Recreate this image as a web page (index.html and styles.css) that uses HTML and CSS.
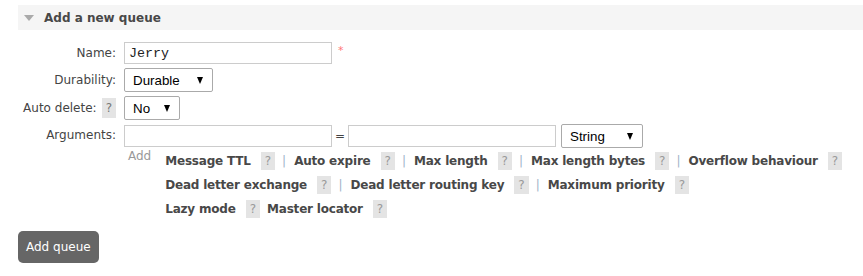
FILE: index.html
```html
<!DOCTYPE html>
<html lang="en">
<head>
  <meta charset="UTF-8">
  <title>Add a new queue</title>
  <link rel="stylesheet" href="styles.css">
</head>
<body>

  <div class="section">
    <h2 class="section-title"><span class="arrow"></span>Add a new queue</h2>

    <form class="queue-form">
      <table class="form">
        <tr>
          <th><label for="name">Name:</label></th>
          <td><input type="text" id="name" class="wide mono" value="Jerry"><span class="mand">*</span></td>
        </tr>
        <tr>
          <th><label>Durability:</label></th>
          <td>
            <div class="select durable"><span>Durable</span><span class="caret"></span></div>
          </td>
        </tr>
        <tr>
          <th><label>Auto delete:</label><span class="help label-help">?</span></th>
          <td>
            <div class="select autodel"><span>No</span><span class="caret"></span></div>
          </td>
        </tr>
        <tr>
          <th class="top"><label>Arguments:</label></th>
          <td>
            <div class="arg-row">
              <input type="text" class="wide">
              <span class="eq">=</span>
              <input type="text" class="wide">
              <div class="select argtype"><span>String</span><span class="caret"></span></div>
            </div>
            <!-- bekannte Argumente -->
            <div class="arg-help">
              <span class="add">Add</span>
              <div class="arg-links">
                <div><b>Message TTL</b><span class="help">?</span><i>|</i><b>Auto expire</b><span class="help">?</span><i>|</i><b>Max length</b><span class="help">?</span><i>|</i><b>Max length bytes</b><span class="help">?</span><i>|</i><b>Overflow behaviour</b><span class="help">?</span></div>
                <div><b>Dead letter exchange</b><span class="help">?</span><i>|</i><b>Dead letter routing key</b><span class="help">?</span><i>|</i><b>Maximum priority</b><span class="help">?</span></div>
                <div><b>Lazy mode</b><span class="help">?</span><b>Master locator</b><span class="help">?</span></div>
              </div>
            </div>
          </td>
        </tr>
      </table>

      <button type="button" class="btn">Add queue</button>
    </form>
  </div>

</body>
</html>
```

FILE: styles.css
```css
body {
  margin: 0;
  padding: 5px 0 0 18px;
  font-family: "DejaVu Sans", Verdana, sans-serif;
  font-size: 12px;
  color: #484848;
  background: #fff;
}

.section-title {
  display: flex;
  align-items: center;
  height: 25px;
  margin: 0;
  padding-left: 6px;
  background: #f5f5f5;
  font-size: 12px;
  font-weight: bold;
  color: #484848;
}

.arrow {
  width: 0;
  height: 0;
  margin: 1px 10px 0 0;
  border-left: 5px solid transparent;
  border-right: 5px solid transparent;
  border-top: 6px solid #aaa;
}

.queue-form {
  margin-left: -18px;
  padding-top: 10px;
}

table.form {
  border-collapse: collapse;
}

table.form th {
  width: 116px;
  padding: 2px 8px 2px 0;
  text-align: right;
  font-weight: normal;
  color: #444;
  white-space: nowrap;
  vertical-align: middle;
}

table.form th.top {
  vertical-align: top;
  padding-top: 6px;
}

table.form td {
  padding: 2px 0;
}

input.wide {
  box-sizing: border-box;
  width: 208px;
  height: 22px;
  border: 1px solid #ccc;
  padding: 2px 4px;
  font-family: "Liberation Mono", monospace;
  font-size: 13.33px;
  color: #222;
  vertical-align: middle;
}

.mand {
  margin-left: 6px;
  font-size: 11px;
  color: #f77;
  vertical-align: 3px;
}

.help {
  display: inline-block;
  padding: 1px 4px;
  background: #e4e4e4;
  color: #999;
  font-weight: normal;
  line-height: 16px;
}

.label-help {
  margin-left: 5px;
  padding: 2px 4px;
  color: #777;
}

.select {
  box-sizing: border-box;
  display: inline-flex;
  align-items: center;
  justify-content: space-between;
  height: 24px;
  padding: 0 9px 0 8px;
  border: 1px solid #aaa;
  border-radius: 2px;
  font-family: "Liberation Sans", Arial, sans-serif;
  font-size: 13.33px;
  color: #000;
  background: #fff;
}

.caret {
  width: 0;
  height: 0;
  border-left: 3.5px solid transparent;
  border-right: 3.5px solid transparent;
  border-top: 7px solid #000;
}

.durable { width: 89px; }
.autodel { width: 56px; }
.argtype { width: 82px; }

.arg-row {
  display: flex;
  align-items: center;
}

.eq {
  width: 16px;
  text-align: center;
  color: #444;
}

.argtype {
  margin-left: 5px;
}

.arg-help {
  display: flex;
  padding-top: 1px;
}

.add {
  padding: 0 14px 0 4px;
  color: #999;
}

.arg-links div {
  line-height: 24px;
  white-space: nowrap;
}

.arg-links b {
  color: #484848;
  letter-spacing: -0.2px;
}

.arg-links .help {
  margin: 0 7px 0 10px;
}

.arg-links i {
  font-style: normal;
  color: #a0b4c8;
  margin-right: 8px;
}

.btn {
  margin: 8px 0 0 18px;
  padding: 9px 8px;
  border: none;
  border-radius: 5px;
  background: #666;
  color: #fff;
  font-family: "DejaVu Sans", Verdana, sans-serif;
  font-size: 12px;
}
```
